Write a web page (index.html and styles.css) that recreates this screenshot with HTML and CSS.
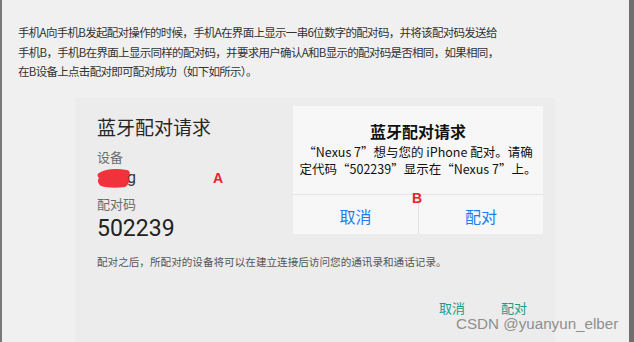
FILE: index.html
```html
<!DOCTYPE html>
<html lang="zh-CN">
<head>
  <meta charset="UTF-8">
  <meta name="viewport" content="width=device-width, initial-scale=1.0">
  <title>蓝牙配对</title>
  <link rel="stylesheet" href="styles.css">
</head>
<body>
  <p class="intro">
    手机A向手机B发起配对操作的时候，手机A在界面上显示一串6位数字的配对码，并将该配对码发送给<br>
    手机B，手机B在界面上显示同样的配对码，并要求用户确认A和B显示的配对码是否相同，如果相同，<br>
    在B设备上点击配对即可配对成功（如下如所示）。
  </p>

  <div class="shot">
    <div class="top-row">
      <div class="pane-a">
        <div class="a-title">蓝牙配对请求</div>
        <div class="a-label">设备</div>
        <div class="a-device">
          <svg class="scribble" width="34" height="22" viewBox="0 0 34 22">
            <path d="M2 6 C8 2 18 1 30 3 C34 4 33 8 31 10 C33 13 32 18 28 20 C20 21 10 21 4 19 C1 17 0 13 2 11 C0 9 0 7 2 6 Z" fill="#f0222c" opacity="0.92"/>
          </svg>
          <span class="a-device-end">g</span>
          <span class="tag tag-a">A</span>
        </div>
        <div class="a-label">配对码</div>
        <div class="a-code">502239</div>
      </div>

      <div class="card-b">
        <div class="b-title">蓝牙配对请求</div>
        <div class="b-text">“Nexus 7”想与您的 iPhone 配对。请确<br>定代码“502239”显示在“Nexus 7”上。</div>
        <div class="b-buttons">
          <span>取消</span>
          <span>配对</span>
        </div>
        <span class="tag tag-b">B</span>
      </div>
    </div>

    <div class="a-note">配对之后，所配对的设备将可以在建立连接后访问您的通讯录和通话记录。</div>
    <div class="a-buttons">
      <span>取消</span>
      <span>配对</span>
    </div>
  </div>

  <div class="watermark">CSDN @yuanyun_elber</div>
</body>
</html>
```

FILE: styles.css
```css
html, body {
  margin: 0;
  height: 342px;
  overflow: hidden;
}
body {
  position: relative;
  box-sizing: border-box;
  background: #f0f0f0;
  border-left: 2px solid #7a7a7a;
  border-right: 5px solid #6e6e6e;
  font-family: "Noto Sans CJK SC", sans-serif;
}
.intro {
  margin: 0;
  padding: 23px 0 0 16px;
  font-size: 11.5px;
  letter-spacing: -0.7px;
  line-height: 19.5px;
  color: #333;
}
.shot {
  margin: 16px 0 0 73px;
  width: 480px;
  height: 250px;
  box-sizing: border-box;
  padding: 8px 12px 0 22px;
  background: #ececec;
}
.top-row {
  display: flex;
  align-items: flex-start;
}
.pane-a {
  flex: none;
  width: 196px;
  padding-top: 9px;
}
.a-title {
  font-size: 19px;
  line-height: 24px;
  color: #262626;
}
.a-label {
  margin-top: 8px;
  font-size: 13px;
  line-height: 20px;
  color: #6c6c6c;
}
.a-device {
  display: flex;
  align-items: center;
  height: 22px;
}
.a-device + .a-label {
  margin-top: 5px;
}
.scribble {
  filter: blur(0.6px);
}
.a-device-end {
  margin-left: -4px;
  font-family: Roboto, sans-serif;
  font-size: 16px;
  color: #333;
}
.a-code {
  margin-top: 1px;
  font-family: Roboto, sans-serif;
  font-size: 23px;
  line-height: 28px;
  color: #222;
}
.tag {
  font-family: "Liberation Sans", Arial, sans-serif;
  font-weight: bold;
  font-size: 14px;
  color: #e8212b;
}
.tag-a {
  margin-left: 77px;
}
.card-b {
  flex: none;
  position: relative;
  width: 250px;
  height: 128px;
  background: #f7f7f7;
  text-align: center;
}
.b-title {
  padding-top: 14px;
  font-size: 16px;
  font-weight: bold;
  line-height: 22px;
  color: #111;
}
.b-text {
  margin-top: 1px;
  font-size: 12.5px;
  line-height: 17px;
  color: #111;
}
.b-buttons {
  position: absolute;
  left: 0;
  right: 0;
  bottom: 0;
  display: grid;
  grid-template-columns: 1fr 1fr;
  height: 39px;
  border-top: 1px solid #e4e4e4;
}
.b-buttons span {
  padding-top: 3px;
  font-size: 16px;
  line-height: 36px;
  color: #1b7ef4;
}
.b-buttons span + span {
  border-left: 1px solid #e4e4e4;
}
.tag-b {
  position: absolute;
  left: 119px;
  top: 84px;
}
.a-note {
  margin-top: 10px;
  font-size: 10.6px;
  line-height: 18px;
  color: #555;
}
.a-buttons {
  display: flex;
  justify-content: flex-end;
  gap: 36px;
  margin: 27px 16px 0 0;
  font-size: 13px;
  line-height: 20px;
  color: #1b9c8b;
}
.watermark {
  position: absolute;
  left: 454px;
  top: 314px;
  font-family: "Liberation Sans", Arial, sans-serif;
  font-size: 15.2px;
  line-height: 20px;
  color: #8f8f8f;
}
```
